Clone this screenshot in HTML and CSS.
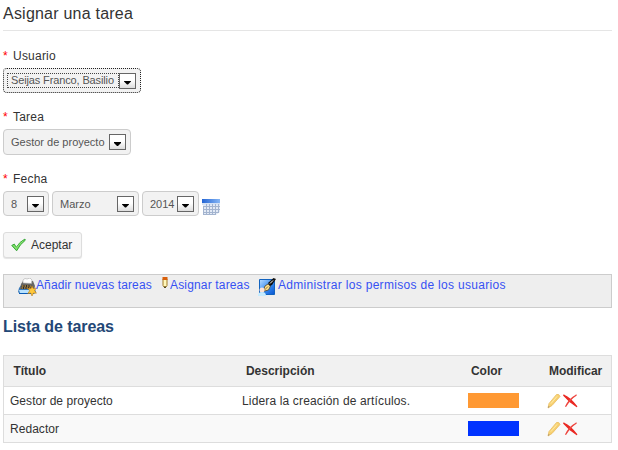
FILE: index.html
```html
<!DOCTYPE html>
<html lang="es">
<head>
<meta charset="utf-8">
<title>Asignar una tarea</title>
<link rel="stylesheet" href="styles.css">
</head>
<body>
<svg class="defs" width="0" height="0" aria-hidden="true">
  <defs>
    <linearGradient id="gold" x1="0" y1="0" x2="1" y2="1"><stop offset="0" stop-color="#ffe999"/><stop offset="1" stop-color="#f0b94a"/></linearGradient>
    <linearGradient id="sky" x1="0" y1="0" x2="1" y2="1"><stop offset="0" stop-color="#b9ddff"/><stop offset=".55" stop-color="#388bf0"/><stop offset="1" stop-color="#0753d0"/></linearGradient>
    <linearGradient id="bar" x1="0" x2="1"><stop offset="0" stop-color="#2465d4"/><stop offset="1" stop-color="#86b6f5"/></linearGradient>
    <symbol id="pencil" viewBox="0 0 14 16"><path d="M1 15 2 10.500 9.500 1.500Q12 .5 13 3.500L5 12.500Z" fill="url(#gold)" stroke="#e8bd62" stroke-width=".8"/><path d="m4 10.500 6-7" stroke="#fff0b4" stroke-width=".8"/><path d="m1 15 .6-2 1 .8Z" fill="#9a8870"/></symbol>
    <symbol id="cross" viewBox="0 0 15 14"><path d="M.5 1Q7 3.500 14 12.800 7 8.500.5 1Z" fill="#e52320" stroke="#ea2a24" stroke-width="1.300"/><path d="M13.500 1Q7 5 2.500 12.800 6 5 13.500 1Z" fill="#e52320" stroke="#ee463f" stroke-width="1.200"/></symbol>
  </defs>
</svg>
<main class="page">
  <h1 class="title">Asignar una tarea</h1>
  <form class="form">
    <div class="field user-field">
      <label class="label"><span class="required">*</span>Usuario</label>
      <div class="select user"><span class="value">Seijas Franco, Basilio</span><i class="arrow"></i></div>
    </div>
    <div class="field task-field">
      <label class="label"><span class="required">*</span>Tarea</label>
      <div class="select task"><span class="value">Gestor de proyecto</span><i class="arrow"></i></div>
    </div>
    <div class="field date-field">
      <label class="label"><span class="required">*</span>Fecha</label>
      <div class="dates">
        <div class="select day"><span class="value">8</span><i class="arrow"></i></div>
        <div class="select month"><span class="value">Marzo</span><i class="arrow"></i></div>
        <div class="select year"><span class="value">2014</span><i class="arrow"></i></div>
        <svg class="calendar" viewBox="0 0 18 17"><path fill="#e3eaf5" d="M1 4h17v9l-4 3H1z"/><path fill="#d5e2f4" d="M0 4h18v2H0z"/><path d="M1.500 7v9M4.500 5v11M7.500 5v11M10.500 5v11M13.500 5v11M16.500 5v8M1 7.500h17M1 10.500h17M1 13.500h16M1 15.500h13" stroke="#a3b4cf" fill="none"/><path fill="url(#bar)" d="M0 0h18v4H0z"/></svg>
      </div>
    </div>
    <button type="button" class="accept"><svg class="check" viewBox="0 0 16 14"><path d="M.8 7.500 3.500 6l2.200 3.500Q9 3.500 14.800.700L15.300 1.800Q9.500 6.200 6 13.200Z" fill="#74dd60" stroke="#35a338"/><path d="m3 7.500 2.600 3.200Q9.500 4.700 13 2.800" stroke="#8fe376" fill="none"/></svg><span>Aceptar</span></button>
  </form>
  <nav class="actions">
    <a class="action add"><svg class="add-icon" viewBox="0 0 19 18"><path d="m1 10 3-4h11l3 8-2 2H2l-2-2Z" fill="#3979b9"/><path d="m3 6 2-3h10l2 5-1 3H2Z" fill="#686765"/><path d="M5 5V2l2-1.500 2 .5 3-1 2 2-.5 3.500Z" fill="#fff" stroke="#aaa" stroke-width=".6"/><path d="M4 7h9l1 4H3Z" fill="#2f2d2d"/><path d="M4 8h9M3.500 10h9" stroke="#f4bd52" stroke-dasharray="1.500 1"/><path d="M1 12h11v3H2Z" fill="#b8e2ff"/><path d="M1 15.500h12" stroke="#075ab7"/><path d="m14 8 1.200 2.500 3-.4-1.600 2.500 1.800 2.600-3-.2L14 18l-1.200-3-3 .5 1.800-2.700-1.600-2.500 3 .3Z" fill="#ffc83b" stroke="#b87910" stroke-width=".6"/></svg><span>Añadir nuevas tareas</span></a>
    <a class="action assign"><svg class="assign-icon" viewBox="0 0 6 12"><path d="M1 2h4v6.500L4 10H2L1 8.500Z" fill="#fff7ba" stroke="#a07a26"/><path d="M.5 0h5v3h-5z" fill="#d9600b"/><path d="M2 9.500h2V11H2z" fill="#514824"/></svg><span>Asignar tareas</span></a>
    <a class="action manage"><svg class="manage-icon" viewBox="0 0 18 18"><path d="M1.500 1.500h15v15h-15z" fill="url(#sky)" stroke="#1263bf"/><path d="m5 13.500 2-5.500 3-2 2.500 2-2 4Z" fill="#ffe18b" stroke="#4d4230" stroke-width=".8"/><path d="m5 13.500 5-5" stroke="#614516" stroke-width=".7"/><path d="m10 5 5.500-5L18 1l-4 6-2 1Z" fill="#111"/><path d="m12 5.500 3-3" stroke="#fff"/><circle cx="4" cy="12" r="2.500" fill="#ffe3d5"/><path d="M0 18q0-4 4-4t4 4Z" fill="#c6ecff"/></svg><span>Administrar los permisos de los usuarios</span></a>
  </nav>
  <h2 class="subtitle">Lista de tareas</h2>
  <table class="tasks">
    <thead><tr><th class="name">Título</th><th class="description">Descripción</th><th class="color">Color</th><th class="modify">Modificar</th></tr></thead>
    <tbody>
      <tr><td>Gestor de proyecto</td><td class="detail">Lidera la creación de artículos.</td><td><div class="swatch orange"></div></td><td><div class="tools"><svg class="pencil"><use href="#pencil"/></svg><svg class="cross"><use href="#cross"/></svg></div></td></tr>
      <tr><td>Redactor</td><td></td><td><div class="swatch blue"></div></td><td><div class="tools"><svg class="pencil"><use href="#pencil"/></svg><svg class="cross"><use href="#cross"/></svg></div></td></tr>
    </tbody>
  </table>
</main>
</body>
</html>
```
FILE: styles.css
```css
* { box-sizing: border-box; }
body { margin: 0; background: #fff; color: #333; font: 12px/16px "Liberation Sans", Arial, sans-serif; overflow: hidden; }
.defs { display: block; height: 0; }
.page { width: 612px; padding-left: 3px; }
.title { height: 31px; margin: 0; padding-top: 4px; border-bottom: 1px solid #e5e5e5; font-size: 16px; line-height: 20px; font-weight: normal; letter-spacing: .22px; }
.form { height: 243px; padding-top: 17px; }
.label { display: flex; height: 20px; line-height: 16px; letter-spacing: .22px; }
.required { width: 10px; color: #f00; }
.user-field { height: 61px; }
.task-field { height: 62px; }
.date-field { height: 61px; }
.select { display: flex; align-items: center; justify-content: space-between; height: 26px; padding: 0 4px 0 7px; border: 1px solid #ccc; border-radius: 4px; background: #f2f2f2; color: #555; font-size: 11px; }
.value { white-space: nowrap; }
.arrow { position: relative; flex: none; width: 17px; height: 16px; border: 1px solid #666; background: linear-gradient(#fff 45%, #ddd); }
.arrow::after { content: ""; position: absolute; left: 4px; top: 7px; width: 7px; height: 4px; background: #000; clip-path: polygon(0 0, 100% 0, 100% 25%, 57% 100%, 43% 100%, 0 25%); }
.user { width: 138px; height: 25px; border: 1px dotted #222; padding: 0 4px 0 3px; }
.user .value { flex: none; width: 112px; padding-left: 3px; border: 1px dotted #444; line-height: 13px; letter-spacing: -.13px; }
.task { width: 128px; }
.dates { display: flex; gap: 3px; }
.dates .select { height: 25px; }
.day { width: 46px; }
.month { width: 87px; }
.year { width: 57px; }
.calendar { width: 18px; height: 17px; margin-top: 8px; }
.accept { display: flex; align-items: center; gap: 5px; width: 79px; height: 26px; margin: 0; padding: 0 0 0 7px; border: 1px solid #ddd; border-radius: 3px; background: #f6f6f6; box-shadow: 0 1px 1px #e4e4e4; color: #333; font: 12px/16px "Liberation Sans", Arial, sans-serif; }
.check { width: 15px; height: 14px; }
.actions { display: flex; height: 34px; padding: 2px 0 0 14px; border: 1px solid #ccc; background: #eee; color: #3651f3; }
.action { display: flex; white-space: nowrap; }
.add { width: 144px; letter-spacing: .12px; }
.assign { width: 96px; letter-spacing: .16px; }
.manage { letter-spacing: .31px; }
.add-icon { width: 19px; height: 18px; margin: 1px -1px 0 0; }
.assign-icon { width: 6px; height: 12px; margin-right: 2px; }
.manage-icon { width: 18px; height: 18px; margin: 1px 2px 0 0; }
.subtitle { height: 47px; margin: 0; padding-top: 9px; color: #234776; font-size: 16px; line-height: 20px; letter-spacing: -.08px; }
.tasks { width: 609px; border-collapse: collapse; table-layout: fixed; border: 1px solid #ddd; }
.tasks tr { height: 28px; border-bottom: 1px solid #ddd; }
.tasks thead tr { height: 31px; background: #f1f1f1; }
.tasks tbody tr:last-child { background: #f9f9f9; }
.tasks th { padding: 0 0 0 9.4px; text-align: left; font-size: 12px; }
.tasks td { padding: 0 0 0 6px; letter-spacing: .04px; }
.tasks .detail { padding-left: 5.5px; letter-spacing: .15px; }
.name { width: 233px; }
.description { width: 225px; }
.color { width: 78px; }
.swatch { width: 51px; height: 15px; }
.orange { background: #f93; }
.blue { background: #03f; }
.tools { display: flex; gap: 2px; align-items: center; height: 16px; padding-left: 1px; }
.pencil { width: 14px; height: 16px; }
.cross { width: 15px; height: 14px; }
```
